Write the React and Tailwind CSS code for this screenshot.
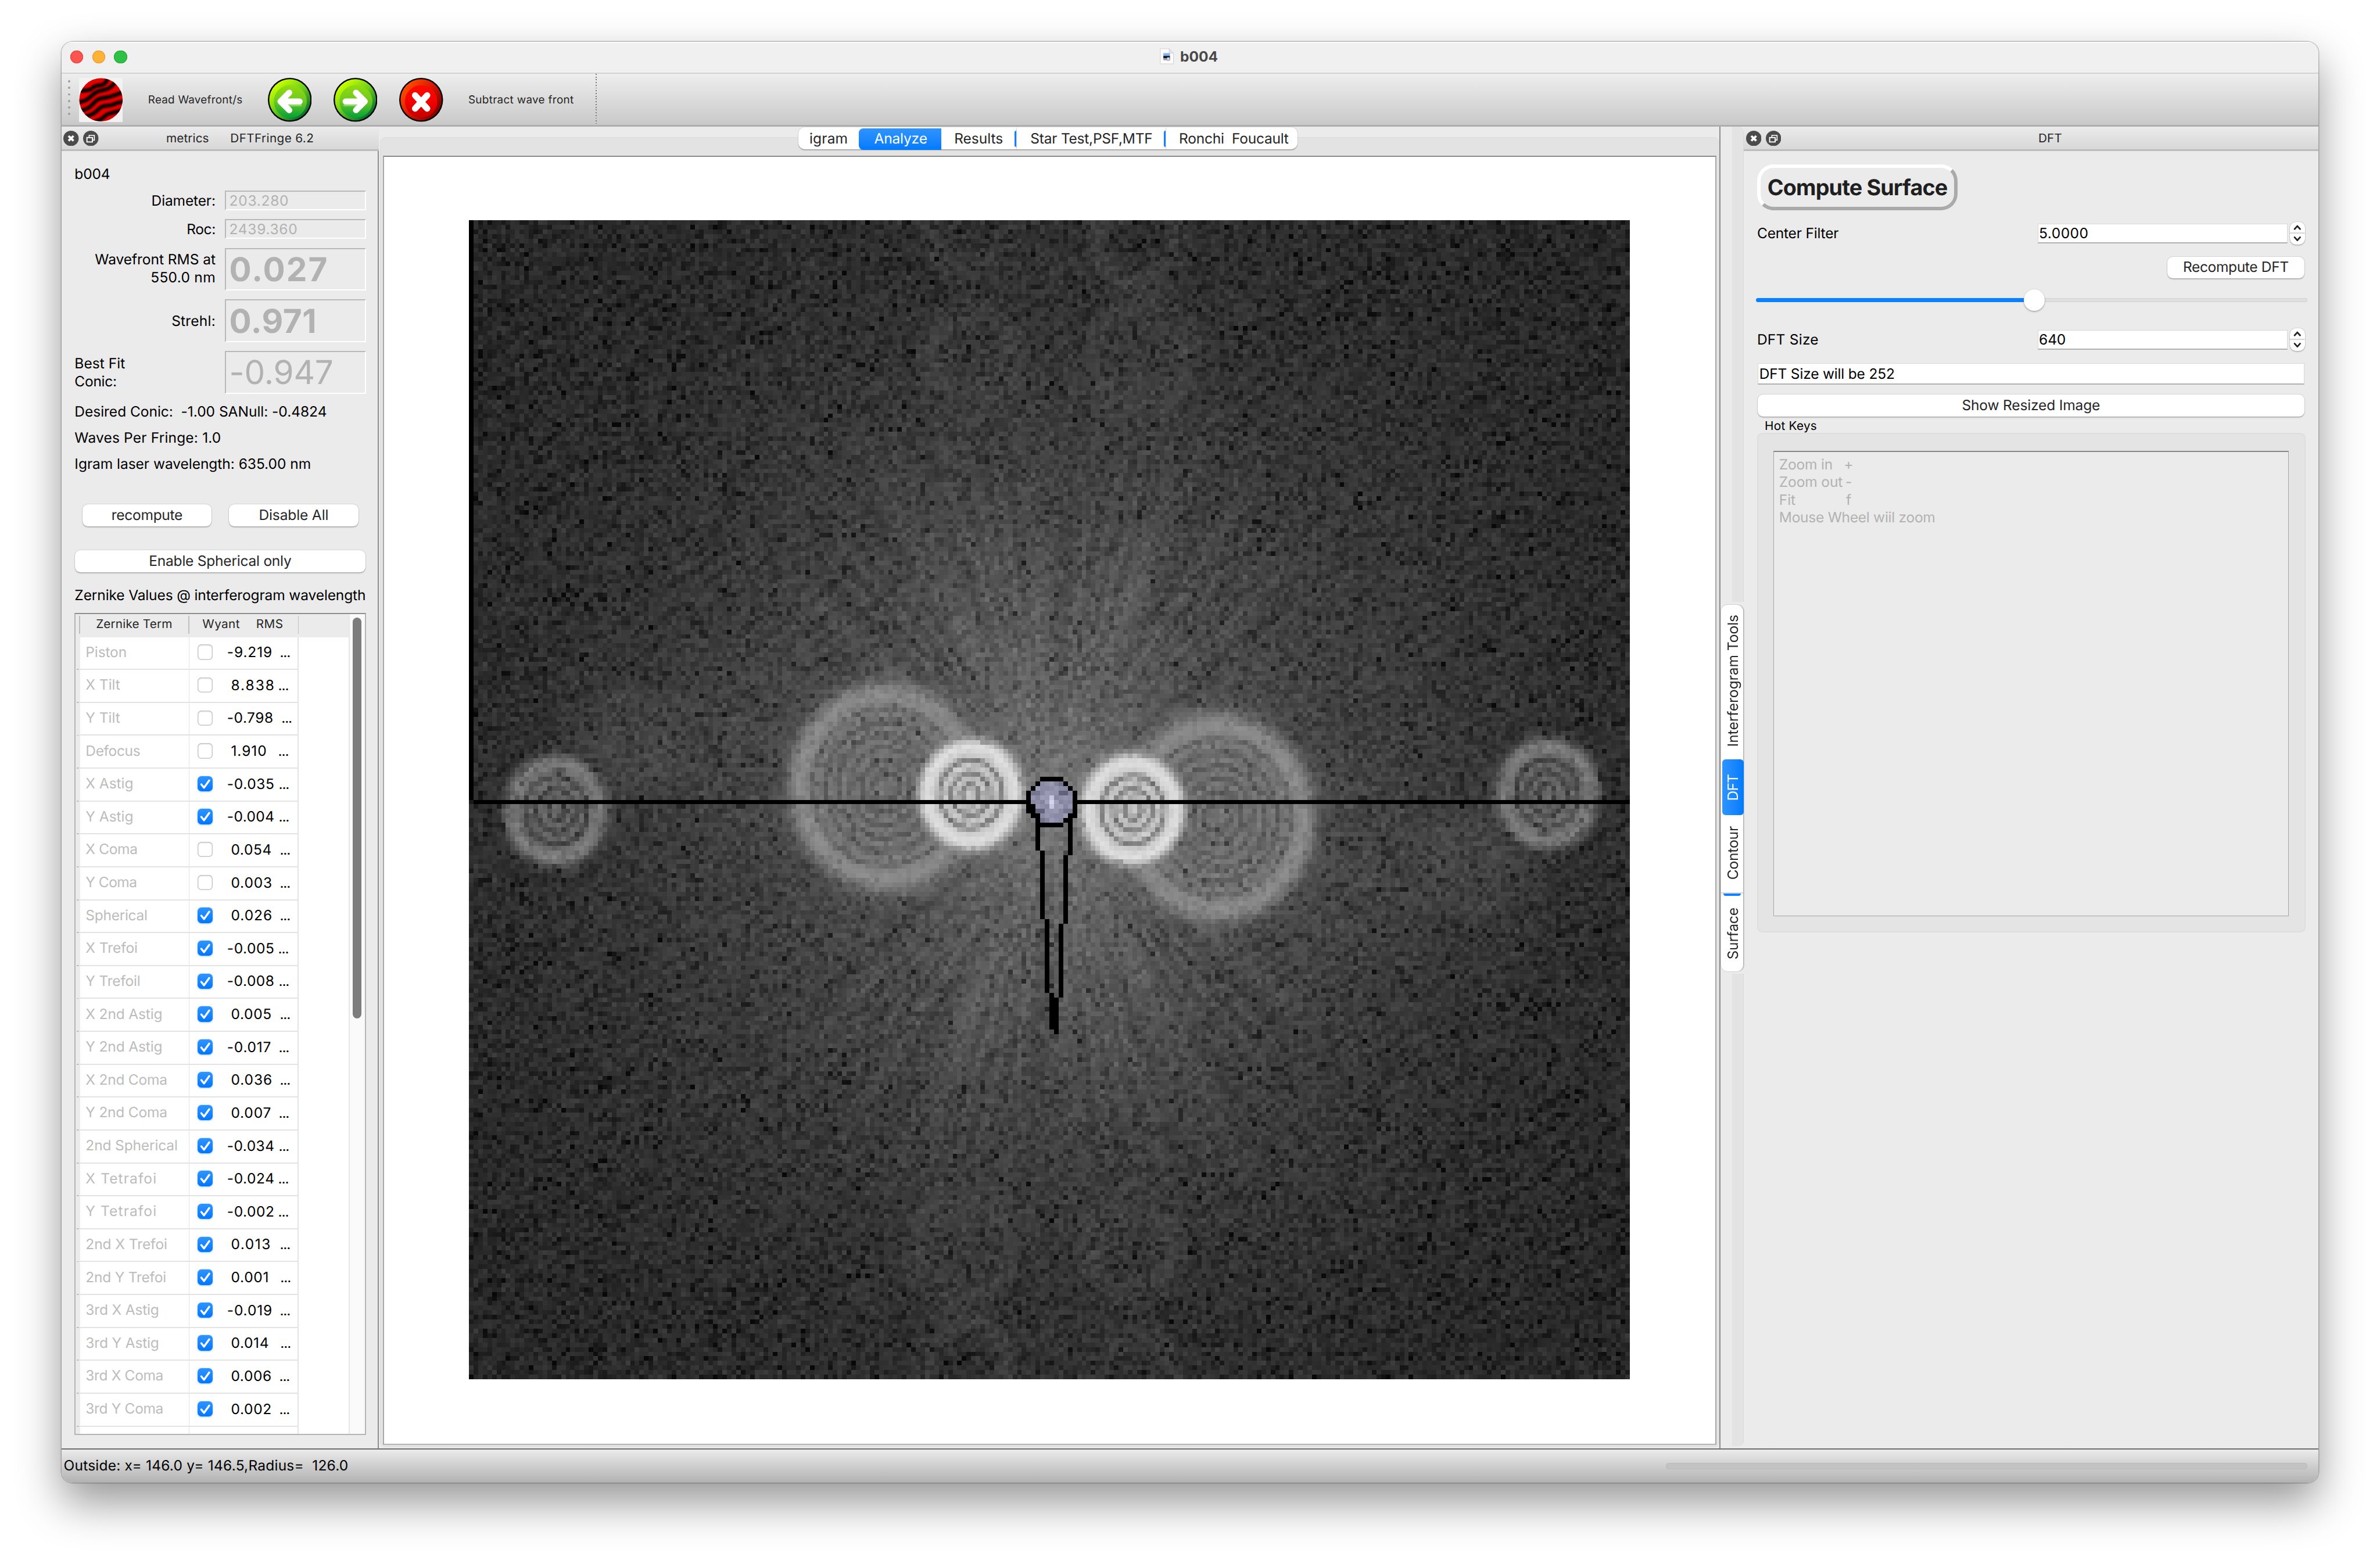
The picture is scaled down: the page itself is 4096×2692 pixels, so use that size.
import { useEffect, useRef } from "react";
import clsx from "clsx";

const ZOOM = 0.9438;
const measurer = document.createElement("canvas").getContext("2d");

// Text whose tracking is adjusted so that it spans a given width.
function T({ children, w, size = 26, weight = 400, className }) {
  measurer.font = `${weight} ${size * ZOOM}px Inter`;
  const natural = measurer.measureText(children).width / ZOOM;
  const spacing = w ? (w + 2 - natural) / Math.max(1, children.length - 1) : 0;
  return (
    <span
      className={clsx("block whitespace-pre leading-none", className)}
      style={{ fontSize: size, fontWeight: weight, letterSpacing: spacing }}
    >
      {children}
    </span>
  );
}

/* ---------- DFT magnitude picture ---------- */

const N = 252;

function random(seed) {
  let a = seed;
  return () => {
    a = (a + 0x6d2b79f5) | 0;
    let t = Math.imul(a ^ (a >>> 15), 1 | a);
    t = (t + Math.imul(t ^ (t >>> 7), 61 | t)) ^ t;
    return ((t ^ (t >>> 14)) >>> 0) / 4294967296;
  };
}

// x, y, ring radius, inner and outer half-width, peak level, interior level, dark ring depth and radii
const RINGS = [
  [108.4, 124.3, 10.4, 2.1, 2.2, 220, 192, 74, [7.4, 4.5, 2]],
  [90, 122.6, 20.2, 3.6, 3, 136, 112, 24, [17.2, 14, 11.2, 8.4, 5.6, 3]],
  [18.4, 127.9, 10.3, 2.3, 2.2, 118, 98, 34, [7.4, 4.6, 2]],
];

// x, y, ring radius, half-width, added brightness
const FAINT = [
  [109, 28.6, 9, 2.5, 9],
  [144.6, 4, 9, 2.5, 12],
  [145, 29, 10, 3.5, 6],
  [107.5, 3, 7, 3.5, 9],
  [109, 28.6, 0, 7, 3],
  [145, 25, 0, 12, 4],
  [34, 112, 5, 8, 12],
  [60, 104, 0, 16, 5],
];

function level(x, y) {
  const dx = x - 126;
  const dy = y - 126;
  const r = Math.hypot(dx, dy);
  const re = Math.hypot(dx / 1.2, dy / 1.45);
  const angle = Math.atan2(Math.abs(dx), Math.abs(dy));
  const turn = Math.atan2(dy, dx);
  let v = 35 + 32 * Math.exp(-((r / 98) ** 2)) + 50 * Math.exp(-re / 29);
  v += 8 * Math.exp(-(((angle - 0.3) / 0.24) ** 2)) * Math.exp(-(((r - 45) / 32) ** 2));
  v += 6 * Math.exp(-((dy / 14) ** 2)) * Math.exp(-((dx / 120) ** 2));
  v += 8 * Math.sin(turn * 58 + Math.sin(turn * 14) * 3) * Math.exp(-(((r - 45) / 30) ** 2)) * (Math.abs(dy) > Math.abs(dx) * 0.8 ? 1 : 0.2);
  v += 2.5 * Math.sin(x * 0.9 + y * 1.6 + Math.sin(y * 0.11) * 4);
  let add = 0;
  for (const side of [0, 1]) {
    const mx = side ? 252 - x : x;
    const my = side ? 252 - y : y;
    for (const [cx, cy, radius, half, amount] of FAINT) {
      const d = Math.hypot(mx - cx, my - cy);
      v += amount * Math.exp(-(((d - radius) / half) ** 2));
    }
    for (const [cx, cy, radius, inside, outside, peak, inner, depth, dark] of RINGS) {
      const d = Math.hypot((mx - cx) * 1.08, my - cy);
      if (d > radius + outside * 3) continue;
      let ring;
      if (d >= radius) {
        ring = v + (peak - v) * Math.exp(-(((d - radius) / outside) ** 2));
      } else {
        ring = inner + (peak - inner) * Math.exp(-(((d - radius) / inside) ** 2));
        for (const q of dark) ring -= depth * Math.exp(-(((d - q) / 0.55) ** 2));
      }
      add = Math.max(add, ring);
    }
  }
  return [Math.max(v, add), add];
}

const OUTLINE = [
  [124, 121, 5, 1], [123, 122, 1, 1], [129, 122, 1, 1], [122, 123, 1, 1], [130, 123, 1, 1],
  [121, 124, 1, 5], [131, 124, 1, 6], [122, 127, 1, 3], [123, 129, 1, 3], [130, 129, 1, 9],
  [129, 130, 1, 1], [123, 131, 6, 1], [123, 131, 1, 6], [124, 137, 1, 15], [129, 138, 1, 15],
  [125, 152, 1, 16], [128, 153, 1, 16], [126, 168, 1, 8], [127, 169, 1, 8],
  [0, 0, 1, 126], [1, 126, 120, 1], [132, 126, 120, 1],
];

function DftPicture() {
  const ref = useRef(null);
  useEffect(() => {
    const ctx = ref.current.getContext("2d");
    const image = ctx.createImageData(N, N);
    const next = random(4711);
    const noise = new Float32Array(N * N);
    for (let i = 0; i < N * N; i++) {
      const n = Math.log(Math.sqrt(-Math.log(1 - next() * 0.9999) + 1e-4));
      noise[i] = Math.max(-2.6, n + 0.29);
    }
    for (let y = 0; y < N; y++) {
      for (let x = 0; x < N; x++) {
        const mirrored = y > 126 || (y === 126 && x > 126);
        const sx = mirrored ? (N - x) % N : x;
        const sy = mirrored ? (N - y) % N : y;
        const grain = noise[sy * N + sx];
        const [base, ring] = level(x, y);
        let calm = 17;
        if (ring > base - 1) calm = ring > 195 ? 5 : ring > 145 ? 14 : ring > 122 ? 9 : 15;
        let v = base + grain * calm;
        const i = (y * N + x) * 4;
        const d = Math.hypot(x - 126, y - 126);
        if (d < 5.4) {
          v = 136 + grain * 22 + 80 * Math.exp(-(((x - 126) / 0.7) ** 2) - (((y - 126) / 1.4) ** 2));
          image.data[i] = v;
          image.data[i + 1] = v;
          image.data[i + 2] = v + 26;
        } else {
          v = Math.max(8, v);
          image.data[i] = image.data[i + 1] = image.data[i + 2] = v;
        }
        image.data[i + 3] = 255;
      }
    }
    ctx.putImageData(image, 0, 0);
    ctx.fillStyle = "#000";
    OUTLINE.forEach(([x, y, w, h]) => ctx.fillRect(x, y, w, h));
  }, []);
  return <canvas ref={ref} width={N} height={N} className="-mt-[2px] h-[2114px] w-[2117px] [image-rendering:pixelated]" />;
}

/* ---------- icons ---------- */

function WaveIcon() {
  return (
    <svg viewBox="0 0 80 80" className="h-[80px] w-[80px] bg-[#f2f2f2]">
      <defs>
        <clipPath id="disc"><circle cx="40" cy="40" r="39.5" /></clipPath>
        <filter id="soft" x="-20%" y="-20%" width="140%" height="140%"><feGaussianBlur stdDeviation="1.9" /></filter>
      </defs>
      <g clipPath="url(#disc)">
        <rect width="80" height="80" fill="#e20000" />
        <g fill="none" stroke="#0c0000" strokeWidth="7" strokeLinecap="round" filter="url(#soft)">
          <path d="M-4 26C10 20 16 26 24 19C32 11 36 16 44 12C50 9 51 5 53 -3" />
          <path d="M-4 45C10 43 16 40 24 32C32 23 42 24 52 20C60 17 62 12 66 8" />
          <path d="M2 60C14 58 20 54 28 45C36 35 46 38 58 34C68 31 72 29 84 25" />
          <path d="M10 70C22 69 28 65 36 57C44 48 54 53 64 48C72 44 76 45 84 42" />
          <path d="M28 80C38 77 42 75 48 69C56 62 66 65 82 57" />
        </g>
      </g>
    </svg>
  );
}

function ArrowIcon({ flip }) {
  const id = flip ? "green-right" : "green-left";
  return (
    <svg viewBox="0 0 80 80" className="h-[80px] w-[80px]">
      <defs>
        <linearGradient id={id} x1="0.2" y1="0.1" x2="0.85" y2="0.9">
          <stop offset="0" stopColor="#c8ff00" />
          <stop offset="0.45" stopColor="#6fd01a" />
          <stop offset="1" stopColor="#00692f" />
        </linearGradient>
        <linearGradient id={`${id}-in`} x1="0" y1="0" x2="0" y2="1">
          <stop offset="0" stopColor="#93dc10" />
          <stop offset="0.5" stopColor="#6cc81f" />
          <stop offset="1" stopColor="#02a03a" />
        </linearGradient>
      </defs>
      <circle cx="40" cy="40" r="40" fill="#000" />
      <circle cx="40" cy="40" r="37.5" fill={`url(#${id})`} />
      <circle cx="41" cy="43" r="30" fill={`url(#${id}-in)`} />
      <g transform={flip ? "translate(80 0) scale(-1 1)" : undefined} fill="none" strokeLinecap="round" strokeLinejoin="round">
        <path d="M26 50H60" stroke="#8fd468" strokeWidth="4" />
        <path d="M39 27L23 43L39 59M24 43H58" stroke="#fff" strokeWidth="11" />
      </g>
    </svg>
  );
}

function CrossIcon() {
  return (
    <svg viewBox="0 0 80 80" className="h-[80px] w-[80px]">
      <defs>
        <linearGradient id="red-out" x1="0.1" y1="0.2" x2="0.9" y2="0.85">
          <stop offset="0" stopColor="#ff4a00" />
          <stop offset="0.5" stopColor="#d81500" />
          <stop offset="1" stopColor="#7a0000" />
        </linearGradient>
        <linearGradient id="red-in" x1="0" y1="0" x2="0" y2="1">
          <stop offset="0" stopColor="#ff0a00" />
          <stop offset="0.5" stopColor="#f40000" />
          <stop offset="1" stopColor="#c40000" />
        </linearGradient>
      </defs>
      <circle cx="40" cy="40" r="40" fill="#000" />
      <circle cx="40" cy="40" r="37.5" fill="url(#red-out)" />
      <circle cx="40" cy="43" r="29.5" fill="url(#red-in)" />
      <path d="M29 32L51 56M51 32L29 56" stroke="#fff" strokeWidth="11.5" strokeLinecap="round" />
    </svg>
  );
}

function DockIcons() {
  return (
    <div className="mt-[2px] flex gap-[8px]">
      <svg viewBox="0 0 28 28" className="h-[28px] w-[28px]">
        <circle cx="14" cy="14" r="14" fill="#4b4b4b" />
        <path d="M9.5 9.5L18.5 18.5M18.5 9.5L9.5 18.5" stroke="#fff" strokeWidth="4" />
      </svg>
      <svg viewBox="0 0 28 28" className="h-[28px] w-[28px]">
        <circle cx="14" cy="14" r="14" fill="#4b4b4b" />
        <path d="M11 12V8.5H20.5V17H17.5" fill="none" stroke="#fff" strokeWidth="1.8" />
        <rect x="7" y="12.5" width="10" height="8" fill="none" stroke="#fff" strokeWidth="2" />
      </svg>
    </div>
  );
}

function DocumentIcon() {
  return (
    <svg viewBox="0 0 26 30" className="h-[30px] w-[26px]">
      <path d="M1 1H17L25 9V28.5H1Z" fill="#fdfdfd" stroke="#cfcfcf" strokeWidth="1" />
      <path d="M17 1V9H25Z" fill="#e6e6e6" stroke="#c8c8c8" strokeWidth="0.8" />
      <rect x="6.5" y="9" width="12" height="6" fill="#7fb4f4" />
      <rect x="6.5" y="14" width="12" height="4.5" fill="#111a2c" />
      <rect x="6.5" y="18" width="12" height="4" fill="#9aa3ad" />
      <circle cx="15.5" cy="19.5" r="3" fill="#d8dcdf" stroke="#666" strokeWidth="0.8" />
    </svg>
  );
}

/* ---------- controls ---------- */

const buttonClass =
  "flex h-[40px] items-center justify-center rounded-[10px] bg-white pb-[2px] text-[#262626] shadow-[0_0_0_1px_rgba(0,0,0,0.09),0_2px_2px_rgba(0,0,0,0.2)]";

function Check({ on }) {
  return (
    <span
      className={clsx(
        "flex h-[28px] w-[28px] shrink-0 items-center justify-center rounded-[7px]",
        on
          ? "bg-linear-to-b from-[#2e94ff] to-[#0076ff] shadow-[0_1px_3px_rgba(0,122,255,0.45)]"
          : "bg-white shadow-[inset_0_0_0_1.5px_#c6c6c6,inset_0_2px_3px_rgba(0,0,0,0.12)]",
      )}
    >
      {on ? (
        <svg viewBox="0 0 28 28" className="h-[28px] w-[28px]">
          <path d="M6.8 14.8L11.8 21L21.3 7.8" fill="none" stroke="#fff" strokeWidth="3.6" strokeLinecap="round" strokeLinejoin="round" />
        </svg>
      ) : null}
    </span>
  );
}

function Field({ children, className }) {
  return (
    <div
      className={clsx(
        "flex w-[258px] items-center border-[2.2px] border-t-[#b9b9b9] border-r-white border-b-white border-l-[#b9b9b9] pl-[6px] text-[#b2b2b2]",
        className,
      )}
    >
      {children}
    </div>
  );
}

function Metric({ label, labelClass = "items-end", className, children }) {
  return (
    <div className={clsx("flex items-stretch gap-[17px]", className)}>
      <div className={clsx("flex w-[257px] flex-col justify-center", labelClass)}>{label}</div>
      {children}
    </div>
  );
}

function Stepper() {
  return (
    <div className="flex h-[41px] w-[27px] flex-col items-center rounded-[11px] bg-white text-[#222] shadow-[0_0_0_1px_rgba(0,0,0,0.1),0_2px_2px_rgba(0,0,0,0.15)]">
      <svg viewBox="0 0 27 41" className="h-[41px] w-[27px]">
        <rect x="0" y="19.3" width="27" height="2" fill="#d2d2d2" />
        <path d="M8.5 13L13.5 7.5L18.5 13M8.5 28L13.5 33.5L18.5 28" fill="none" stroke="currentColor" strokeWidth="3" strokeLinecap="round" strokeLinejoin="round" />
      </svg>
    </div>
  );
}

function SpinRow({ label, w, value, vw, className }) {
  return (
    <div className={clsx("flex h-[41px] items-center", className)}>
      <div className="w-[512px]"><T w={w}>{label}</T></div>
      <div className="flex h-[36px] w-[456px] items-center border-[1.1px] border-b-[2.2px] border-[#d8d8d8] border-b-[#b0b0b0] bg-white pl-[1px]">
        <T w={vw}>{value}</T>
      </div>
      <div className="ml-[4px]"><Stepper /></div>
    </div>
  );
}

/* ---------- left dock ---------- */

const ROWS = [
  ["Piston", 73, false, "-9.219", 80, 511], ["X Tilt", 61, false, "8.838", 77, 508],
  ["Y Tilt", 61, false, "-0.798", 82, 514], ["Defocus", 98, false, "1.910", 63, 508],
  ["X Astig", 85, true, "-0.035", 84, 509], ["Y Astig", 85, true, "-0.004", 84, 509],
  ["X Coma", 93, false, "0.054", 72, 511], ["Y Coma", 92, false, "0.003", 73, 511],
  ["Spherical", 111, true, "0.026", 73, 511], ["X Trefoi", 93, true, "-0.005", 84, 508],
  ["Y Trefoil", 98, true, "-0.008", 84, 509], ["X 2nd Astig", 138, true, "0.005", 72, 511],
  ["Y 2nd Astig", 138, true, "-0.017", 78, 509], ["X 2nd Coma", 147, true, "0.036", 73, 511],
  ["Y 2nd Coma", 147, true, "0.007", 71, 509], ["2nd Spherical", 166, true, "-0.034", 84, 509],
  ["X Tetrafoi", 127, true, "-0.024", 84, 508], ["Y Tetrafoi", 127, true, "-0.002", 84, 508],
  ["2nd X Trefoi", 147, true, "0.013", 70, 511], ["2nd Y Trefoi", 145, true, "0.001", 67, 512],
  ["3rd X Astig", 132, true, "-0.019", 80, 511], ["3rd Y Astig", 132, true, "0.014", 67, 512],
  ["3rd X Coma", 140, true, "0.006", 72, 510], ["3rd Y Coma", 140, true, "0.002", 72, 510],
];

function ZernikeTable() {
  return (
    <div className="mt-[19px] flex h-[1499px] w-[531px] overflow-hidden border-[2.2px] border-t-[#8e8e8e] border-r-[#b4b4b4] border-b-[#b4b4b4] border-l-[#b4b4b4] bg-white">
      <div className="flex w-[498px] flex-col">
        <div className="flex h-[42px] shrink-0 bg-[#ebebeb] text-[#262626]">
          <div className="mt-[3px] ml-[6px] h-[33px] w-[2px] bg-[#c0c0c0]" />
          <div className="flex w-[197px] justify-center pt-[9px]"><T size={22} w={137}>Zernike Term</T></div>
          <div className="mt-[3px] h-[33px] w-[2px] bg-[#c0c0c0]" />
          <div className="flex w-[198px] pt-[9px] pl-[24px]">
            <div className="w-[98px]"><T size={22} w={66}>Wyant</T></div>
            <T size={22} w={47}>RMS</T>
          </div>
          <div className="mt-[3px] h-[33px] w-[2px] bg-[#c0c0c0]" />
        </div>
        {ROWS.map(([name, nameW, on, value, valueW, dots]) => (
          <div key={name} className="flex h-[60px] shrink-0">
            <div className="flex w-[8px] items-end bg-[#ebebeb] pl-[2px]"><div className="h-[2px] w-[4px] bg-[#c0c0c0]" /></div>
            <div className="flex w-[199px] items-center border-r-[1.5px] border-b-[2.2px] border-[#e3e3e3] pb-[4px] pl-[10px] text-[#bcbcbc]">
              <T w={nameW}>{name}</T>
            </div>
            <div className="flex w-[200px] items-center border-r-[2.2px] border-b-[2.2px] border-[#e3e3e3] pb-[3px] pl-[15px] text-black">
              <Check on={on} />
              <div
                className={value[0] === "-" ? "pl-[26px]" : "pl-[33px]"}
                style={{ width: dots - 389 }}
              >
                <T w={valueW}>{value}</T>
              </div>
              <T w={18}>...</T>
            </div>
          </div>
        ))}
        <div className="flex grow">
          <div className="w-[8px] bg-[#ebebeb]" />
          <div className="w-[199px] border-r-[1.5px] border-[#e3e3e3]" />
          <div className="w-[200px] border-r-[2.2px] border-[#e3e3e3]" />
        </div>
      </div>
      <div className="flex grow justify-center border-l-[2.2px] border-[#e6e6e6] bg-[#fafafa] pt-[6px]">
        <div className="h-[731px] w-[16px] rounded-full bg-[#7d7d7d]" />
      </div>
    </div>
  );
}

function DockHeader({ children }) {
  return (
    <div className="flex h-[44px] shrink-0 items-center border-b-[3.2px] border-[#bcbcbc] bg-linear-to-b from-[#ebebeb] to-[#d7d7d7] pl-[4px] text-[#262626]">
      <DockIcons />
      {children}
    </div>
  );
}

function MetricsDock() {
  return (
    <div className="flex w-[579px] shrink-0 flex-col">
      <DockHeader>
        <div className="mt-[5px] ml-[123px] w-[117px]"><T size={22} w={76}>metrics</T></div>
        <div className="mt-[5px]"><T size={22} w={150}>DFTFringe 6.2</T></div>
      </DockHeader>
      <div className="flex h-[2366px] flex-col border-r-[2.2px] border-[#8f8f8f] pl-[24px] text-black">
        <div className="mt-[29px] h-[26px]"><T w={63}>b004</T></div>
        <Metric className="mt-[18px] h-[36px]" label={<T w={115}>Diameter:</T>}>
          <Field><T w={106}>203.280</T></Field>
        </Metric>
        <Metric className="mt-[16px] h-[36px]" label={<T w={51}>Roc:</T>}>
          <Field><T w={122}>2439.360</T></Field>
        </Metric>
        <Metric
          className="mt-[16px] h-[78px]"
          labelClass="items-end gap-[7px] pb-[3px]"
          label={<><T w={218}>Wavefront RMS at</T><T w={116}>550.0 nm</T></>}
        >
          <Field className="pt-[2px]"><T size={60} weight={700} w={177}>0.027</T></Field>
        </Metric>
        <Metric className="mt-[16px] h-[78px]" label={<T w={78}>Strehl:</T>}>
          <Field className="pt-[2px]"><T size={60} weight={700} w={157}>0.971</T></Field>
        </Metric>
        <Metric
          className="mt-[16px] h-[78px]"
          labelClass="items-start gap-[6px]"
          label={<><T w={90}>Best Fit</T><T w={75}>Conic:</T></>}
        >
          <Field className="pt-[2px]"><T size={60} w={188}>-0.947</T></Field>
        </Metric>
        <div className="mt-[20px]"><T w={458}>Desired Conic:  -1.00 SANull: -0.4824</T></div>
        <div className="mt-[21px]"><T w={265}>Waves Per Fringe: 1.0</T></div>
        <div className="mt-[22px]"><T w={429}>Igram laser wavelength: 635.00 nm</T></div>
        <div className="mt-[61px] ml-[14px] flex gap-[31px]">
          <div className={clsx(buttonClass, "w-[236px]")}><T w={128}>recompute</T></div>
          <div className={clsx(buttonClass, "w-[237px]")}><T w={125}>Disable All</T></div>
        </div>
        <div className={clsx(buttonClass, "mt-[44px] ml-px w-[529px] shrink-0")}><T w={258}>Enable Spherical only</T></div>
        <div className="mt-[29px]"><T w={529}>Zernike Values @ interferogram wavelength</T></div>
        <ZernikeTable />
      </div>
    </div>
  );
}

/* ---------- centre ---------- */

function TabMark() {
  return (
    <div className="flex h-[40px] w-[6px] items-center">
      <div className="h-[30px] w-[3px] rounded-l-full bg-[#0f83ff]" />
      <div className="h-[39px] w-[1.5px] bg-[#d8d8d8]" />
    </div>
  );
}

function CenterPane() {
  return (
    <div className="relative flex h-[2410px] w-[2446px] shrink-0 flex-col border-r-[2.2px] border-[#8c8c8c] bg-[#ebebeb] pt-[19px] pl-[2px]">
      <div className="flex h-[2389px] flex-col rounded-[10px] border-[1.1px] border-[#dcdcdc] bg-[#e3e3e3] pt-[33px] pr-[4px] pl-[4px]">
        <div className="flex h-[2351px] items-center justify-center border-[2.2px] border-t-[#8a8a8a] border-r-[#a8a8a8] border-b-[#b4b4b4] border-l-[#a8a8a8] bg-white">
          <DftPicture />
        </div>
      </div>
      <div className="absolute top-[1px] left-[765px] flex h-[40px] w-[910px] items-center rounded-[12px] bg-white pt-[2px] text-[#262626] shadow-[0_0_0_1px_rgba(0,0,0,0.1),0_2px_1px_rgba(0,0,0,0.2)]">
        <div className="w-[114px] pl-[20px]"><T w={68}>igram</T></div>
        <div className="mt-[2px] -ml-[4px] flex h-[39px] w-[150px] items-center rounded-l-[8px] bg-linear-to-b from-[#2e94ff] to-[#007aff] pb-[2px] pl-[28px] text-white">
          <T w={95}>Analyze</T>
        </div>
        <div className="w-[134px] pl-[24px]"><T w={87}>Results</T></div>
        <TabMark />
        <div className="w-[266px] pl-[23px]"><T w={221}>Star Test,PSF,MTF</T></div>
        <TabMark />
        <div className="pl-[22px]"><T w={198}>Ronchi  Foucault</T></div>
      </div>
    </div>
  );
}

/* ---------- right dock ---------- */

function SideTabs() {
  const turned = "[writing-mode:vertical-rl] rotate-180";
  return (
    <div className="flex h-[2409px] w-[43px] shrink-0 flex-col bg-[#ebebeb]">
      <div className="ml-[21px] h-[867px] rounded-tr-[10px] border-r-[1.1px] border-[#d9d9d9] bg-[#e3e3e3]" />
      <div className="mt-[5px] ml-[1px] flex h-[669px] w-[41px] flex-col items-center rounded-[12px] bg-white text-[#262626] shadow-[0_0_0_1px_rgba(0,0,0,0.1),2px_0_1px_rgba(0,0,0,0.16)]">
        <div className="mt-[18px] ml-[2px] flex h-[264px] items-start"><div className={turned}><T w={239}>Interferogram Tools</T></div></div>
        <div className="ml-[4px] flex h-[102px] w-[39px] shrink-0 items-center justify-center rounded-[6px] bg-linear-to-r from-[#2e94ff] to-[#007aff] text-white">
          <div className={clsx(turned, "mr-[1px]")}><T w={47}>DFT</T></div>
        </div>
        <div className="mt-[20px] ml-[2px] h-[121px]"><div className={turned}><T w={96}>Contour</T></div></div>
        <div className="h-[2px] w-full bg-[#d8d8d8]" />
        <div className="h-[4px] w-[31px] rounded-b-full bg-[#0f83ff]" />
        <div className="mt-[21px] ml-[2px]"><div className={turned}><T w={93}>Surface</T></div></div>
      </div>
      <div className="mt-[4px] ml-[21px] h-[861px] rounded-br-[10px] border-r-[1.1px] border-[#d9d9d9] bg-[#e3e3e3]" />
    </div>
  );
}

function DftDock() {
  return (
    <div className="flex grow flex-col">
      <DockHeader>
        <div className="mt-[5px] ml-[469px]"><T size={22} w={41}>DFT</T></div>
      </DockHeader>
      <div className="flex flex-col pl-[24px] text-black">
        <div className="mt-[25px] flex h-[84px] w-[366px] items-center justify-center rounded-[30px] border-[6.4px] border-t-white border-r-[#aaaaaa] border-b-[#aaaaaa] border-l-white pt-[3px] text-[#1f1f1f]">
          <T size={40} weight={700} w={327}>Compute Surface</T>
        </div>
        <SpinRow className="mt-[21px]" label="Center Filter" w={147} value="5.0000" vw={88} />
        <div className={clsx(buttonClass, "mt-[22px] ml-[748px] w-[250px]")}><T w={191}>Recompute DFT</T></div>
        <div className="mt-[19px] -ml-[2px] flex h-[41px] w-[1006px] items-center">
          <div className="h-[8px] w-[489px] rounded-l-[4px] bg-[#0a82ff]" />
          <div className="relative -ml-px h-[39px] w-[39px] shrink-0 rounded-full bg-white shadow-[0_0_0_1px_rgba(0,0,0,0.07),0_2px_3px_rgba(0,0,0,0.25)]" />
          <div className="-ml-px h-[8px] grow rounded-r-[4px] bg-[#dedede] shadow-[inset_0_0_0_1px_#d3d3d3]" />
        </div>
        <SpinRow className="mt-[31px]" label="DFT Size" w={110} value="640" vw={47} />
        <div className="mt-[22px] ml-[1px] flex h-[40px] w-[997px] items-center border-[1.1px] border-b-[2.2px] border-[#d8d8d8] border-b-[#b0b0b0] bg-white pl-[2px]">
          <T w={245}>DFT Size will be 252</T>
        </div>
        <div className={clsx(buttonClass, "mt-[18px] ml-[1px] w-[997px]")}><T w={250}>Show Resized Image</T></div>
        <div className="mt-[7px] ml-[14px]"><T size={22} w={93}>Hot Keys</T></div>
        <div className="mt-[1px] h-[911px] w-[1000px] rounded-[10px] border-[2.2px] border-[#dedede] bg-[#e4e4e4] px-[28px] pt-[30px]">
          <div className="flex h-[849px] flex-col gap-[6px] border-[1.1px] border-t-[2.2px] border-[#a6a6a6] border-t-[#868686] bg-[#ebebeb] pt-[10px] pl-[9px] text-[#b2b2b2]">
            <div className="flex"><div className="w-[118px]"><T w={96}>Zoom in</T></div><T>+</T></div>
            <div className="flex"><div className="w-[121px]"><T w={114}>Zoom out</T></div><T>-</T></div>
            <div className="flex"><div className="w-[122px]"><T w={28}>Fit</T></div><T>f</T></div>
            <T w={283}>Mouse Wheel wiil zoom</T>
          </div>
        </div>
      </div>
    </div>
  );
}

/* ---------- window ---------- */

function TitleBar() {
  return (
    <div className="flex h-[56px] items-center bg-[#f0f0f0] pl-[16px] shadow-[inset_0_2px_0_#fbfbfb]">
      <div className="flex gap-[16px]">
        <div className="h-[24px] w-[24px] rounded-full bg-[#ff5450] shadow-[inset_0_0_0_1px_#e0443f]" />
        <div className="h-[24px] w-[24px] rounded-full bg-[#ffb238] shadow-[inset_0_0_0_1px_#e09a28]" />
        <div className="h-[24px] w-[24px] rounded-full bg-[#2ec145] shadow-[inset_0_0_0_1px_#22a935]" />
      </div>
      <div className="ml-[1883px] flex items-center gap-[11px] pb-[2px] text-[#484848]">
        <DocumentIcon />
        <T weight={700} w={67}>b004</T>
      </div>
    </div>
  );
}

function Toolbar() {
  return (
    <div className="flex h-[99px] border-t-[2.2px] border-b-[3.2px] border-t-[#d2d2d2] border-b-[#aeaeae] bg-linear-to-b from-[#eeeeee] to-[#c9c9c9] text-[#262626]">
      <div className="mt-[12px] ml-[12px] flex w-[4px] flex-col gap-[8px]">
        {[0, 1, 2, 3, 4, 5].map((i) => (
          <div key={i} className="h-[4px] w-[4px] rounded-full bg-[#9d9d9d]" />
        ))}
      </div>
      <div className="mt-[8px] ml-[16px] flex h-[80px] items-center">
        <WaveIcon />
        <div className="mt-[2px] ml-[46px] w-[218px]"><T size={20} w={170}>Read Wavefront/s</T></div>
        <ArrowIcon />
        <div className="ml-[40px]"><ArrowIcon flip /></div>
        <div className="ml-[40px]"><CrossIcon /></div>
        <div className="mt-[2px] ml-[46px] w-[232px]"><T size={20} w={190}>Subtract wave front</T></div>
      </div>
      <div className="h-[92px] w-[2px] bg-[repeating-linear-gradient(to_bottom,#7a7a7a_0,#7a7a7a_2px,transparent_2px,transparent_5px)]" />
    </div>
  );
}

function StatusBar() {
  return (
    <div className="flex h-[63px] items-center justify-between border-t-[2.2px] border-[#6e6e6e] bg-linear-to-b from-[#ebebeb] to-[#b2b2b2] pr-[21px] pb-[2px] pl-[4px] text-black">
      <T w={517}>Outside: x= 146.0 y= 146.5,Radius=  126.0</T>
      <div className="mt-[2px] h-[12px] w-[1169px] rounded-[6px] bg-[#c3c3c3] shadow-[inset_0_0_0_1px_#bababa]" />
    </div>
  );
}

export default function App() {
  return (
    <div className="h-[2692px] w-[4096px] overflow-hidden bg-white">
      <div className="h-[2852px] w-[4340px] overflow-hidden bg-white pt-[76px] pl-[112px] font-[Inter,sans-serif] [text-rendering:geometricPrecision] [zoom:0.9438]">
        <div className="h-[2628px] w-[4116px] rounded-[20px] shadow-[0_0_0_1.5px_rgba(0,0,0,0.22),0_36px_80px_rgba(0,0,0,0.42)]">
          <div className="flex h-[2628px] w-[4116px] flex-col overflow-hidden rounded-[20px] bg-[#ebebeb]">
            <TitleBar />
            <Toolbar />
            <div className="flex h-[2410px] shrink-0">
              <MetricsDock />
              <CenterPane />
              <SideTabs />
              <DftDock />
            </div>
            <StatusBar />
          </div>
        </div>
      </div>
    </div>
  );
}
